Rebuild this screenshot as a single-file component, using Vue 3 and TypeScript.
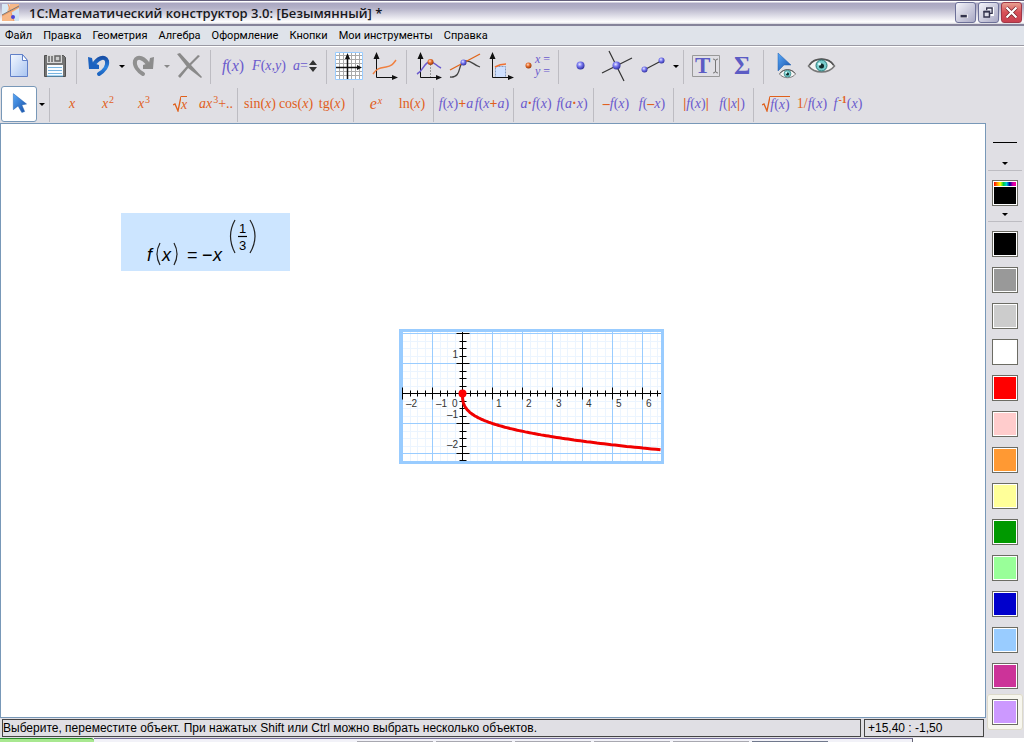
<script setup lang="ts">
type Part = [text: string, cls: string]
interface MathButton { name: string; parts: Part[]; root?: 'o' | 'p' }

const menus: string[] = ['Файл', 'Правка', 'Геометрия', 'Алгебра', 'Оформление', 'Кнопки', 'Мои инструменты', 'Справка']

const fx: Part[] = [['f', 'p i'], ['(', 'p'], ['x', 'p i'], [')', 'p']]
const ox: Part = ['x', 'o i']
const call = (fn: string): Part[] => [[fn + '(', 'o'], ox, [')', 'o']]

const groups: MathButton[][] = [
  [
    { name: 'x', parts: [ox] },
    { name: 'x²', parts: [ox, ['2', 'o sup']] },
    { name: 'x³', parts: [ox, ['3', 'o sup']] },
    { name: '√x', parts: [ox], root: 'o' },
    { name: 'ax³+..', parts: [['ax', 'o i'], ['3', 'o sup'], ['+..', 'o']] },
  ],
  [
    { name: 'sin(x)', parts: call('sin') },
    { name: 'cos(x)', parts: call('cos') },
    { name: 'tg(x)', parts: call('tg') },
  ],
  [
    { name: 'eˣ', parts: [['e', 'o i big'], ['x', 'o i sup']] },
    { name: 'ln(x)', parts: call('ln') },
  ],
  [
    { name: 'f(x)+a', parts: [...fx, ['+', 'o b'], ['a', 'p i']] },
    { name: 'f(x+a)', parts: [['f', 'p i'], ['(', 'p'], ['x', 'p i'], ['+', 'o b'], ['a', 'p i'], [')', 'p']] },
  ],
  [
    { name: 'a·f(x)', parts: [['a', 'p i'], ['·', 'o b'], ...fx] },
    { name: 'f(a·x)', parts: [['f', 'p i'], ['(', 'p'], ['a', 'p i'], ['·', 'o b'], ['x', 'p i'], [')', 'p']] },
  ],
  [
    { name: '-f(x)', parts: [['–', 'o b'], ...fx] },
    { name: 'f(-x)', parts: [['f', 'p i'], ['(', 'p'], ['–', 'o b'], ['x', 'p i'], [')', 'p']] },
  ],
  [
    { name: '|f(x)|', parts: [['|', 'o b'], ...fx, ['|', 'o b']] },
    { name: 'f(|x|)', parts: [['f', 'p i'], ['(', 'p'], ['|', 'o b'], ['x', 'p i'], ['|', 'o b'], [')', 'p']] },
  ],
  [
    { name: '√f(x)', parts: fx, root: 'o' },
    { name: '1/f(x)', parts: [['1/', 'o'], ...fx] },
    { name: 'f⁻¹(x)', parts: [['f', 'p i'], ['-1', 'o sup b'], ['(', 'p'], ['x', 'p i'], [')', 'p']] },
  ],
]

const colors: string[] = [
  '#000000', '#999999', '#cccccc', '#ffffff', '#ff0000', '#ffcccc', '#ff9933',
  '#ffff99', '#009900', '#99ff99', '#0000cc', '#99ccff', '#cc3399', '#cc99ff',
]
const selected = colors.length - 1

// Plot geometry: one unit is 30px, the origin sits at (ox0, oy0)
const unit = 30
const ox0 = 63.5
const oy0 = 64.5
const range = (from: number, to: number): number[] => Array.from({ length: to - from + 1 }, (_, k) => from + k)
const quarterX = range(-8, 26).map(k => ({ p: ox0 + Math.round(k * unit / 4), major: k % 4 === 0 }))
const quarterY = range(-8, 8).map(k => ({ p: oy0 + Math.round(k * unit / 4), major: k % 4 === 0 }))
const curve = 'M' + range(0, 132)
  .map(k => {
    const x = 6.6 * Math.pow(k / 132, 3)
    return `${(ox0 + x * unit).toFixed(1)} ${(oy0 + Math.cbrt(x) * unit).toFixed(1)}`
  })
  .join('L')
const xLabels: [string, number][] = [['–2', 7], ['–1', 37], ['0', 53], ['1', 97], ['2', 127], ['3', 157], ['4', 187], ['5', 217], ['6', 247]]
const yLabels: [string, number][] = [['1', 29], ['–1', 89], ['–2', 119]]
</script>

<template>
  <div class="window">
    <svg class="defs" aria-hidden="true">
      <defs>
        <radialGradient id="ballBlue" cx=".4" cy=".35" r=".65"><stop offset="0" stop-color="#e8e8ff" /><stop offset=".45" stop-color="#7878f0" /><stop offset="1" stop-color="#3030a0" /></radialGradient>
        <radialGradient id="ballOrange" cx=".4" cy=".35" r=".65"><stop offset="0" stop-color="#ffe0c8" /><stop offset=".45" stop-color="#e87030" /><stop offset="1" stop-color="#983808" /></radialGradient>
        <linearGradient id="paper" x1="0" y1="0" x2="1" y2="1"><stop offset="0" stop-color="#f4f8ff" /><stop offset="1" stop-color="#a8c4f0" /></linearGradient>
        <linearGradient id="cursor" x1="0" y1="0" x2="1" y2="1"><stop offset="0" stop-color="#58a8f8" /><stop offset="1" stop-color="#1850a8" /></linearGradient>
        <linearGradient id="undo" x1="0" y1="0" x2="0" y2="1"><stop offset="0" stop-color="#1850a8" /><stop offset=".6" stop-color="#2c84e0" /><stop offset="1" stop-color="#1c64c0" /></linearGradient>
        <g id="axes"><path d="M9.5 10V29.5H26" fill="none" stroke="#111" /><path d="M9.5 4l3 7h-6zM31 29.500l-6 2.500v-5z" fill="#111" /></g>
        <g id="eye">
          <path d="M-13 0C-7-9 7-9 13 0C7 8-7 8-13 0Z" fill="#f4f4f4" stroke="#777" stroke-width="1.500" />
          <path d="M-12-1C-7-9 7-9 12-1" fill="none" stroke="#555" stroke-width="1.500" />
          <circle cy="-.5" r="5.500" fill="#78cccc" stroke="#287878" /><circle r="2.500" fill="#102828" /><circle cx="-2" cy="-2" r="1.500" fill="#e0ffff" />
        </g>
      </defs>
    </svg>

    <header class="title">
      <svg class="logo" width="17" height="17" viewBox="0 0 17 17"><rect width="17" height="17" fill="#f6b888" /><path d="M0 0h8L5 8l-5 3z" fill="#d8e8f4" /><path d="M9 9l8-5v13H12z" fill="#d0e4f4" /><path d="M0 12L17 3M6 0l6 17" stroke="#f09860" fill="none" /><path d="M0 11L17 2" stroke="#777" /><circle cx="11" cy="13" r="2" fill="#4848d8" /></svg>
      <h1>1С:Математический конструктор 3.0: [Безымянный] *</h1>
      <button class="win" aria-label="Свернуть"><svg viewBox="0 0 21 21"><path d="M5 14.500h8" stroke="#fff" stroke-width="4" /><path d="M5 14.500h7" stroke="#33334d" stroke-width="3" /></svg></button>
      <button class="win" aria-label="Восстановить"><svg viewBox="0 0 21 21"><path d="M9 8V6h6v7h-2" fill="none" stroke="#fff" stroke-width="3" /><path d="M8.500 8V5.500h6v6H12" fill="none" stroke="#33334d" stroke-width="1.500" /><path d="M5.500 9.500h6v6h-6z" fill="#dcdce8" stroke="#33334d" stroke-width="1.500" /><path d="M5 9.500h7" stroke="#33334d" stroke-width="2" /></svg></button>
      <button class="win close" aria-label="Закрыть"><svg viewBox="0 0 21 21"><path d="M5 5l11 11M16 5L5 16" stroke="#702028" stroke-width="4" /><path d="M5 5l11 11M16 5L5 16" stroke="#fff" stroke-width="2.500" /></svg></button>
    </header>

    <nav class="menu"><button v-for="m in menus" :key="m">{{ m }}</button></nav>

    <div class="bars">
      <div class="bar" role="toolbar" aria-label="Основная панель">
        <button class="tool" aria-label="Создать"><svg viewBox="0 0 36 36"><path d="M9.500 6.500h12l5 6v16h-17z" fill="url(#paper)" stroke="#6080c8" /><path d="M21.500 6.500v6h5z" fill="#fff" stroke="#6080c8" /></svg></button>
        <button class="tool" aria-label="Сохранить"><svg viewBox="0 0 36 36"><path d="M7.500 7.500h19l2 2v19h-21z" fill="#747474" stroke="#505050" /><path d="M10 7h15v8H10z" fill="#d8d8d8" /><path d="M12 8v6M15 8v6M18 8h5v5h-5z" stroke="#666" fill="#ccc" stroke-width="1.500" /><path d="M10 17h16v11H10z" fill="#f8fcff" /><path d="M11 19.500h14M11 22.500h14M11 25.500h14" stroke="#78b4e0" /><path d="M10 28h16" stroke="#58b0e8" /></svg></button>
        <i class="sep"></i>
        <button class="tool" aria-label="Отменить"><svg viewBox="0 0 36 36"><path d="M12 18C16 10 24 7 26 13C27 18 23 23 18 26" fill="none" stroke="url(#undo)" stroke-width="4" stroke-linecap="round" /><path d="M7 9l4 1 1 5 6 2v4H8z" fill="#1c62c0" /></svg></button>
        <button class="drop" aria-label="Список отмены"></button>
        <button class="tool" aria-label="Повторить"><svg viewBox="0 0 36 36"><g transform="matrix(-1 0 0 1 35 0)"><path d="M12 18C16 10 24 7 26 13C27 18 23 23 18 26" fill="none" stroke="#909090" stroke-width="4" stroke-linecap="round" /><path d="M7 9l4 1 1 5 6 2v4H8z" fill="#8c8c8c" /></g></svg></button>
        <button class="drop off" aria-label="Список повтора"></button>
        <button class="tool" aria-label="Удалить"><svg viewBox="0 0 36 36" fill="#8a8a8a"><path d="M6 6l3-1 11 12 11 12-1 1L17 20z" /><path d="M29 8l-2-1L15 19 7 28l2 2 9-11z" /></svg></button>
        <i class="sep"></i>
        <button class="tool math wide"><span class="p i">f</span><span class="p">(</span><span class="p i">x</span><span class="p">)</span></button>
        <button class="tool math"><span class="p i">F</span><span class="p">(</span><span class="p i">x,y</span><span class="p">)</span></button>
        <button class="tool math"><span class="p i">a</span><span class="p">=</span><svg class="spin" viewBox="0 0 8 12"><path d="M4 0l4 5H0zM4 12l4-5H0z" fill="#333" /></svg></button>
        <i class="sep"></i>
        <button class="tool" aria-label="Сетка"><svg viewBox="0 0 36 36"><path d="M4.500 4.500h27v27h-27z" fill="#fff" stroke="#99ccff" /><path d="M8.500 5v26M12.500 5v26M20.500 5v26M24.500 5v26M28.500 5v26M5 7.500h26M5 11.500h26M5 15.500h26M5 23.500h26M5 27.500h26" stroke="#aaa" /><path d="M16.500 9v22M5 19.500h22" stroke="#111" stroke-width="1.500" /><path d="M16.500 5l2.500 6h-5zM31 19.500l-5 2.500v-5z" fill="#111" /></svg></button>
        <button class="tool" aria-label="График"><svg viewBox="0 0 36 36"><use href="#axes" /><path d="M6 26C10 20 13 20 19 19C25 18 26 16 29 12" fill="none" stroke="#f08040" stroke-width="1.500" /></svg></button>
        <i class="sep"></i>
        <button class="tool" aria-label="Точка на графике"><svg viewBox="0 0 36 36"><use href="#axes" /><path d="M19.500 16v13" stroke="#999" stroke-dasharray="2 1" /><path d="M6 26C13 22 13 14 19 14C24 14 24 17 30 20" fill="none" stroke="#6a5acd" stroke-width="1.500" /><circle cx="19.500" cy="14" r="3" fill="url(#ballOrange)" /></svg></button>
        <button class="tool" aria-label="Касательная"><svg viewBox="0 0 36 36"><path d="M3 29C16 30 10 14 18 13C25 12 26 17 33 19" fill="none" stroke="#444" stroke-width="1.300" /><path d="M3 22L33 6" stroke="#e06418" stroke-width="1.300" /><circle cx="16.500" cy="14.500" r="3" fill="url(#ballBlue)" /></svg></button>
        <button class="tool" aria-label="Площадь"><svg viewBox="0 0 36 36"><path d="M12.500 18.500h10v11h-10z" fill="#cfe0ff" stroke="#8098c0" stroke-dasharray="2 1" /><use href="#axes" /><path d="M12 19q5-3 11-3" fill="none" stroke="#f07030" stroke-width="1.500" /></svg></button>
        <button class="tool" aria-label="Координаты"><svg viewBox="0 0 36 36"><circle cx="9.500" cy="17.500" r="3" fill="url(#ballOrange)" /><text class="xy" x="16" y="15"><tspan class="i">x</tspan> =</text><text class="xy" x="16" y="27"><tspan class="i">y</tspan> =</text></svg></button>
        <i class="sep"></i>
        <button class="tool" aria-label="Точка"><svg viewBox="0 0 36 36"><circle cx="17.500" cy="17.500" r="4" fill="url(#ballBlue)" /></svg></button>
        <button class="tool" aria-label="Пересечение"><svg viewBox="0 0 36 36"><path d="M3 25L33 10M10 3l15 30" stroke="#333" stroke-width="1.200" /><circle cx="17.500" cy="17.500" r="4" fill="url(#ballBlue)" /></svg></button>
        <button class="tool" aria-label="Отрезок"><svg viewBox="0 0 36 36"><path d="M9 22l17-9" stroke="#333" stroke-width="1.200" /><circle cx="9.500" cy="21.500" r="3" fill="url(#ballBlue)" /><circle cx="26.500" cy="12.500" r="3" fill="url(#ballBlue)" /></svg></button>
        <button class="drop" aria-label="Линии"></button>
        <i class="sep"></i>
        <button class="tool" aria-label="Текст"><svg viewBox="0 0 36 36"><path d="M4.500 7.500h27v21h-27z" fill="none" stroke="#999" /><text class="glyph" x="7" y="25" font-size="23">T</text><path d="M25 11q2.500 0 2.500 2q0-2 2.500-2M27.500 13v11M25 25q2.500 0 2.500-2q0 2 2.500 2" fill="none" stroke="#777" /></svg></button>
        <button class="tool" aria-label="Формула"><svg viewBox="0 0 36 36"><text class="glyph" x="10" y="26" font-size="25">Σ</text></svg></button>
        <i class="sep"></i>
        <button class="tool" aria-label="Показать или скрыть"><svg viewBox="0 0 36 36"><path d="M10 5l13 12h-7l-6 6z" fill="url(#cursor)" stroke="#2060b0" stroke-width=".5" /><use href="#eye" transform="translate(19.500 26) scale(.62)" /></svg></button>
        <button class="tool" aria-label="Показать всё"><svg viewBox="0 0 36 36"><use href="#eye" transform="translate(17.500 18)" /></svg></button>
      </div>

      <div class="bar second" role="toolbar" aria-label="Функции">
        <button class="tool active" aria-label="Выбор" aria-pressed="true"><svg viewBox="0 0 36 36"><path d="M12 7v17l5-4 4 7 3-1-3-7 5-1z" fill="url(#cursor)" stroke="#2060b0" stroke-width=".5" /></svg></button>
        <button class="drop" aria-label="Режимы выбора"></button>
        <template v-for="(g, gi) in groups" :key="gi">
          <i class="sep"></i>
          <button v-for="b in g" :key="b.name" class="tool math" :aria-label="b.name">
            <svg v-if="b.root" class="radical" viewBox="0 0 8 16"><path d="M0 9l2-1 3 7L8 .5" fill="none" stroke="#e0601c" stroke-width="1.300" /></svg>
            <span :class="{ rooted: b.root }"><span v-for="(p, pi) in b.parts" :key="pi" :class="p[1]">{{ p[0] }}</span></span>
          </button>
        </template>
      </div>
    </div>

    <div class="body">
      <div class="left">
        <main class="canvas">
          <svg class="formula" width="169" height="58" viewBox="0 0 169 58">
            <g class="ft">
              <text class="it" x="26" y="48">f</text><text class="it" x="41" y="48">x</text>
              <text x="66" y="48">=</text><text x="81" y="48">−</text><text class="it" x="92" y="48">x</text>
              <text class="sm" x="118" y="20">1</text><text class="sm" x="118" y="37">3</text>
            </g>
            <path d="M117 23.500h9" stroke="#000" stroke-width="1.200" />
            <path d="M39 30q-6 11 0 22M53 30q6 11 0 22M114 7q-9 16 0 33M129 7q10 16 0 33" fill="none" stroke="#222" stroke-width="1.200" />
          </svg>

          <svg class="plot" width="265" height="135" viewBox="0 0 265 135">
            <rect width="265" height="135" fill="#fff" />
            <g stroke-width="1">
              <path v-for="t in quarterX" :key="'gx' + t.p" :d="`M${t.p} 3V132`" :stroke="t.major ? '#99ccff' : '#ecf5ff'" />
              <path v-for="t in quarterY" :key="'gy' + t.p" :d="`M3 ${t.p}H262`" :stroke="t.major ? '#99ccff' : '#ecf5ff'" />
              <path v-for="t in quarterX.filter(q => q.major)" :key="'mx' + t.p" :d="`M${t.p} 3V132`" stroke="#99ccff" />
            </g>
            <rect x="1.500" y="1.500" width="262" height="132" fill="none" stroke="#99ccff" stroke-width="3" />
            <g stroke="#000">
              <path :d="`M3 ${oy0}H262M${ox0} 3V132`" />
              <path v-for="t in quarterX" :key="'tx' + t.p" :d="`M${t.p} ${oy0 - (t.major ? 6 : 3)}v${t.major ? 12 : 6}`" />
              <path v-for="t in quarterY" :key="'ty' + t.p" :d="`M${ox0 - (t.major ? 6 : 3)} ${t.p}h${t.major ? 13 : 7}`" />
              <path :d="`M${ox0 - 3} 131.500h7`" />
            </g>
            <g class="lab">
              <text v-for="l in xLabels" :key="'lx' + l[0]" :x="l[1]" y="78">{{ l[0] }}</text>
              <text v-for="l in yLabels" :key="'ly' + l[0]" x="59" :y="l[1]" text-anchor="end">{{ l[0] }}</text>
            </g>
            <path :d="curve" fill="none" stroke="#f00000" stroke-width="3" />
            <circle :cx="ox0" :cy="oy0" r="4" fill="#f00" />
          </svg>
        </main>
        <footer class="status">
          <p class="hint">Выберите, переместите объект. При нажатых Shift или Ctrl можно выбрать несколько объектов.</p>
          <p class="coords">+15,40 : -1,50</p>
        </footer>
      </div>

      <aside class="side">
        <button class="line" aria-label="Стиль линии"></button>
        <button class="drop low" aria-label="Стили линий"></button>
        <i class="hsep"></i>
        <button class="swatch palette" aria-label="Палитра"><i></i></button>
        <button class="drop low" aria-label="Другие цвета"></button>
        <i class="hsep last"></i>
        <div class="colors">
          <button v-for="(c, i) in colors" :key="c" class="slot" :class="{ on: i === selected }" :aria-label="c"><i class="swatch" :style="{ backgroundColor: c }"></i></button>
        </div>
      </aside>
    </div>

    <div class="taskbar"><i class="start"></i><i class="tasks"><b v-for="n in 6" :key="n" :class="{ cur: n === 6 }"></b></i></div>
  </div>
</template>

<style>
body { margin: 0; }
</style>

<style scoped>
* { box-sizing: border-box; }
button { border: 0; padding: 0; margin: 0; background: none; font: inherit; color: inherit; }
p, h1 { margin: 0; font-weight: normal; }
svg { display: block; }
.window { display: flex; flex-direction: column; min-height: 100vh; background: #e0dfe4; font-family: "Liberation Sans", Arial, sans-serif; color: #000; overflow: hidden; }
.defs { position: absolute; width: 0; height: 0; }

.title { display: flex; align-items: center; gap: 2px; height: 26px; padding: 0 2px; border-top: 1px solid #64607c; border-bottom: 2px solid #85839a; background: linear-gradient(#fff 0, #fff 1px, #a9a6c0 2px, #b4b2c8 7px, #fff 21px, #d4d4dc 23px); }
.title h1 { flex: 1; padding-left: 8px; font: 600 13px/20px "Open Sans", "Noto Sans", sans-serif; white-space: nowrap; color: #181820; }
.win { width: 21px; height: 21px; border: 1px solid #6c7098; border-radius: 3px; background: linear-gradient(135deg, #f4f4fa, #a8a8c4); }
.win svg { width: 19px; height: 19px; }
.win.close { border-color: #a03848; background: linear-gradient(#e8a090, #d85058 50%, #c84050); }

.menu { display: flex; gap: 11px; height: 20px; padding: 0 5px; background: #dfe3ea; border-bottom: 1px solid #9a99a3; font: 11px/19px Roboto, "Noto Sans", sans-serif; white-space: nowrap; }

.bars { border-top: 1px solid #fff; }
.bar { display: flex; padding-left: 1px; height: 39px; padding-top: 1px; }
.bar.second { height: 37px; padding-top: 0; }
.tool { flex: 0 0 36px; height: 36px; }
.tool > svg { width: 36px; height: 36px; }
.tool.active { border: 1px solid #7898b8; border-radius: 3px; background: #fff; }
.tool.active > svg { width: 34px; height: 34px; }
.sep { flex: 0 0 8px; height: 34px; margin-top: 2px; background: linear-gradient(#bdbcc2, #bdbcc2) 3px 0 / 1px 100% no-repeat; }
.drop { flex: 0 0 9px; display: flex; align-items: center; justify-content: center; height: 36px; }
.drop::after { content: ""; border: 3px solid transparent; border-top-color: #000; border-bottom: 0; }
.drop.off::after { border-top-color: #888; }

.math { display: flex; align-items: center; justify-content: center; font: 14px/20px "Liberation Serif", "Times New Roman", serif; white-space: nowrap; }
.math.wide { font-size: 16px; }
.math > .spin { width: 8px; height: 12px; margin-left: 1px; }
.math > .radical { width: 8px; height: 16px; }
.o { color: #e0601c; }
.p { color: #6a5acd; }
.i { font-style: italic; }
.b { font-weight: bold; }
.big { font-size: 16px; }
.sup { font-size: 10px; line-height: 1px; vertical-align: 5px; padding-left: 1px; }
.rooted { border-top: 1px solid #e0601c; line-height: 15px; }
.xy { font: 12px "Liberation Serif", serif; fill: #6a5acd; }
.xy .i { font-style: italic; }
.glyph { font-family: "Liberation Serif", serif; font-weight: bold; fill: #5c5cc4; }

.body { flex: 1; display: flex; }
.left { flex: 1; display: flex; flex-direction: column; min-width: 0; }
.canvas { position: relative; flex: 1; border: 1px solid #7898b8; background: #fff; overflow: hidden; }
.formula { position: absolute; left: 120px; top: 89px; background: #cce5ff; }
.plot { position: absolute; left: 398px; top: 205px; }
.ft { font: 18px "Liberation Sans", Arial, sans-serif; }
.it { font-style: italic; }
.sm { font-size: 13px; }
.lab { font: 10px "Liberation Sans", Arial, sans-serif; fill: #333; }

.status { display: flex; gap: 3px; padding: 1px 2px 1px; font-size: 12px; line-height: 16px; white-space: nowrap; }
.status p { border: 1px solid #444; padding: 0; }
.hint { flex: 1; overflow: hidden; }
.status .coords { flex: 0 0 120px; padding: 0 3px; }

.side { flex: 0 0 38px; display: flex; flex-direction: column; align-items: center; padding-top: 19px; }
.line { width: 24px; height: 16px; border-top: 1px solid #000; }
.drop.low { flex: 0 0 10px; width: 36px; }
.hsep { width: 34px; height: 1px; margin: 2px 0 9px; background: #bdbcc2; }
.hsep.last { margin-bottom: 4px; }
.swatch { display: block; width: 26px; height: 26px; border: 1px solid #6c6c64; box-shadow: inset 0 0 0 1px #fff; }
.palette { padding: 1px; margin-bottom: 3px; background: #fff; }
.palette i { display: block; height: 22px; border-top: 4px solid transparent; background: linear-gradient(#fff, #fff) 0 0 / 100% 1px no-repeat padding-box, linear-gradient(#000, #000) padding-box, linear-gradient(90deg, #f00, #f80, #ff0, #0c4, #0cd, #009, #c0a, #f09) border-box; }
.slot { display: flex; align-items: center; justify-content: center; width: 36px; height: 36px; }
.slot.on { border-radius: 3px; background: #f7f6ee; box-shadow: inset 0 0 0 1px #dddacb; }

.taskbar { display: flex; height: 4px; background: #fff; }
.start { width: 94px; background: #a8e890; border-top: 1px solid #2c8a2c; border-radius: 0 3px 0 0; }
.tasks { display: flex; gap: 3px; width: 80%; padding-left: 263px; padding-top: 2px; border-top: 1px solid #77709a; border-right: 1px solid #667; background: #f2f2f8; }
.tasks b { width: 76px; height: 1px; background: #a8a8b0; }
.tasks b.cur { background: #70788c; }
</style>
